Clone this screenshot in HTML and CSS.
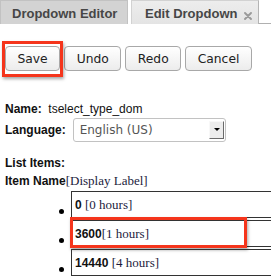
FILE: index.html
```html
<!DOCTYPE html>
<html>
<head>
<meta charset="utf-8">
<link rel="stylesheet" href="styles.css">
</head>
<body>
<div class="page">
  <div class="tabs">
    <div class="tab">Dropdown Editor</div>
    <div class="tab active"><span>Edit Dropdown</span><svg class="close" width="8" height="8" viewBox="0 0 8 8"><path d="M1 1 L7 7 M7 1 L1 7" stroke="#9a9a9a" stroke-width="1.9" stroke-linecap="round"/></svg></div>
    <div class="tab-fill"></div>
  </div>
  <div class="actions">
    <span class="btn-wrap"><button class="btn">Save</button><span class="hl hl-save"></span></span>
    <button class="btn">Undo</button>
    <button class="btn">Redo</button>
    <button class="btn">Cancel</button>
  </div>
  <div class="row name-row"><b>Name:</b>&nbsp; tselect_type_dom</div>
  <div class="row lang-row"><b>Language:</b>
    <div class="select"><span class="select-text">English (US)</span><span class="arrow"></span></div>
  </div>
  <div class="row heading"><b>List Items:</b></div>
  <div class="row heading2"><b>Item Name</b><span class="serif">[Display Label]</span></div>
  <ul class="items">
    <li class="item"><span class="bullet"></span><div class="box"><b>0</b> <span class="serif">[0 hours]</span></div></li>
    <li class="item"><span class="bullet"></span><div class="box"><b>3600</b><span class="serif">[1 hours]</span></div><span class="hl hl-item"></span></li>
    <li class="item"><span class="bullet"></span><div class="box"><b>14440</b> <span class="serif">[4 hours]</span></div></li>
  </ul>
</div>
</body>
</html>
```
FILE: styles.css
```css
html, body {
  margin: 0;
  padding: 0;
  background: #fff;
  overflow: hidden;
}
.page {
  width: 271px;
  height: 278px;
  overflow: hidden;
  font-family: "Liberation Sans", Arial, sans-serif;
  font-size: 12px;
  color: #111;
  position: relative;
}
.tabs {
  display: flex;
  height: 24px;
}
.tab {
  box-sizing: border-box;
  height: 24px;
  padding: 3px 10px 0 11px;
  line-height: 20px;
  font-size: 13px;
  font-weight: bold;
  color: #464646;
  background: #d3d3d3;
  border: 1px solid #c2c2c2;
  border-bottom: none;
  width: 128px;
  flex-shrink: 0;
  white-space: nowrap;
}
.tab.active {
  margin-left: 3px;
  width: 128px;
  padding-left: 13px;
  padding-right: 5px;
  background: linear-gradient(#ededed, #e4e4e4);
  border-color: #d2d2d2 #b4b4b4 transparent #d2d2d2;
  display: flex;
  align-items: flex-start;
}
.close {
  flex-shrink: 0;
  margin-left: 7px;
  margin-top: 8px;
}
.tab-fill {
  flex: 1;
  border-bottom: 1px solid #b0b0b0;
  height: 23px;
}
.actions {
  display: flex;
  margin-top: 22px;
  padding-left: 5px;
  gap: 4px;
}
.btn-wrap {
  position: relative;
  display: flex;
}
.btn {
  box-sizing: border-box;
  height: 25px;
  padding: 0 11.5px;
  margin: 0;
  font-family: "DejaVu Sans", Verdana, sans-serif;
  font-size: 12.3px;
  color: #222;
  background: linear-gradient(#ffffff, #ececec);
  border: 1px solid #a8a8a8;
  border-radius: 4px;
}
.hl {
  position: absolute;
  border: 3px solid #f5351c;
  box-shadow: 1px 2px 3px rgba(0,0,0,0.35);
  pointer-events: none;
}
.hl-save {
  left: -3px;
  right: -3px;
  top: -5px;
  bottom: -6px;
}
.row {
  padding-left: 5px;
  line-height: 14px;
  white-space: nowrap;
}
.name-row {
  margin-top: 31px;
  height: 14px;
}
.lang-row {
  margin-top: 2px;
  height: 24px;
  display: flex;
  align-items: center;
}
.select {
  box-sizing: border-box;
  margin-left: 7px;
  width: 153px;
  height: 24px;
  border: 1px solid #c2c2c2;
  border-radius: 3px;
  background: #fff;
  display: flex;
  align-items: center;
  justify-content: space-between;
  padding-left: 6px;
  padding-right: 1px;
}
.select-text {
  font-family: "DejaVu Sans", Verdana, sans-serif;
  font-size: 12px;
  color: #555;
}
.arrow {
  box-sizing: border-box;
  width: 15px;
  height: 18px;
  background: #ececec;
  border: 1px solid;
  border-color: #f8f8f8 #6a6a6a #6a6a6a #f8f8f8;
  position: relative;
}
.arrow::after {
  content: "";
  position: absolute;
  left: 4px;
  top: 6px;
  border-left: 3px solid transparent;
  border-right: 3px solid transparent;
  border-top: 3px solid #000;
}
.heading {
  margin-top: 14px;
}
.heading2 {
  margin-top: 4px;
}
.serif {
  font-family: "Liberation Serif", "Times New Roman", serif;
  font-size: 13px;
  font-weight: normal;
  color: #1b1b3c;
}
.items {
  list-style: none;
  margin: 3px 0 0 0;
  padding: 0;
}
.item {
  display: flex;
  position: relative;
  height: 27px;
  margin-bottom: 2px;
}
.bullet {
  width: 5px;
  height: 5px;
  border-radius: 50%;
  background: #000;
  margin-left: 59px;
  margin-top: 18px;
}
.box {
  box-sizing: border-box;
  margin-left: 7px;
  flex: 1;
  margin-right: -30px;
  height: 27px;
  border: 1px solid #333;
  padding-left: 3px;
  line-height: 25px;
  white-space: nowrap;
}
.hl-item {
  left: 70px;
  top: -3px;
  width: 171px;
  height: 25px;
}
```
